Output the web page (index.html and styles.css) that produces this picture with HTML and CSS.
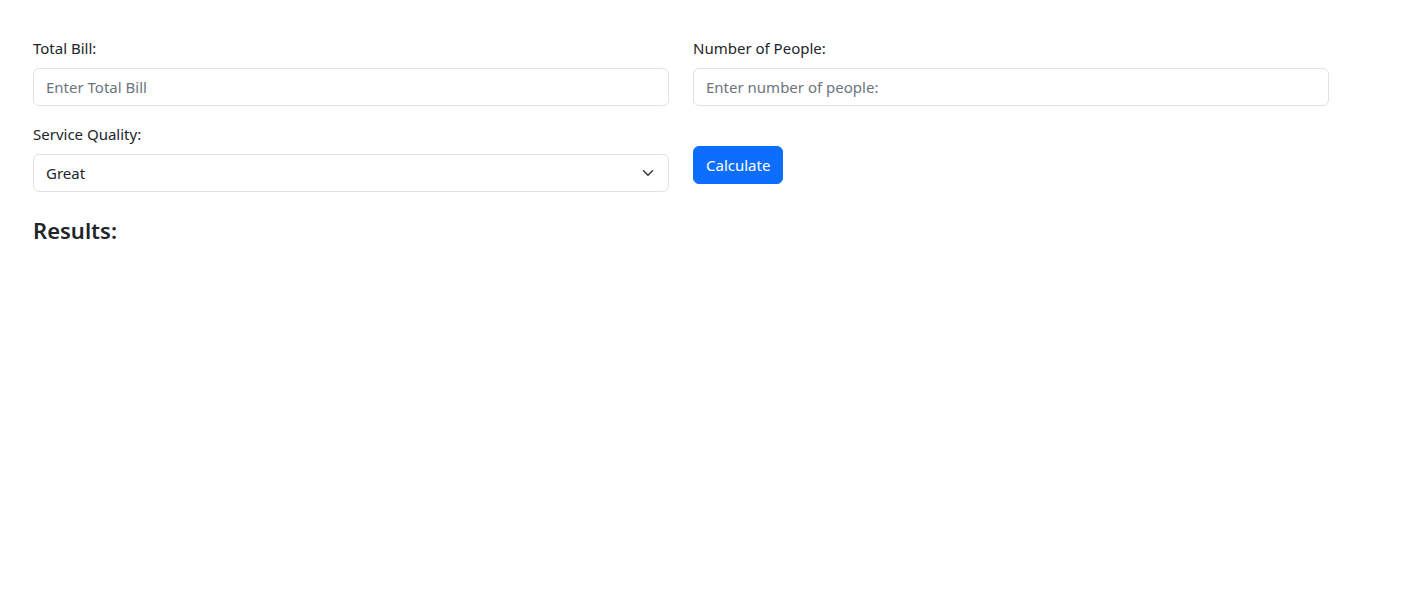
FILE: index.html
```html
<!DOCTYPE html>
<html lang="en">
<head>
<meta charset="utf-8">
<title>Tip Calculator</title>
<link rel="stylesheet" href="styles.css">
</head>
<body>
<div class="container">
  <div class="row">
    <div class="field">
      <label class="form-label" for="bill">Total Bill:</label>
      <input class="form-control" id="bill" type="text" placeholder="Enter Total Bill">
    </div>
    <div class="field">
      <label class="form-label" for="people">Number of People:</label>
      <input class="form-control" id="people" type="text" placeholder="Enter number of people:">
    </div>
  </div>
  <div class="row">
    <div class="field">
      <label class="form-label" for="service">Service Quality:</label>
      <select class="form-select" id="service">
        <option>Great</option>
        <option>Good</option>
        <option>Bad</option>
      </select>
    </div>
    <div class="field">
      <button class="btn" type="button">Calculate</button>
    </div>
  </div>
  <h4 class="results">Results:</h4>
</div>
</body>
</html>
```
FILE: styles.css
```css
* { box-sizing: border-box; }
html, body { margin: 0; padding: 0; background: #fff; }
body {
  font-family: "Noto Sans", "Open Sans", sans-serif;
  font-size: 15px;
  line-height: 1.5;
  color: #212529;
}
.container {
  padding: 36px 33px 0 33px;
  max-width: 1362px;
}
.row {
  display: grid;
  grid-template-columns: 636px 636px;
  column-gap: 24px;
  margin-bottom: 16px;
}
.form-label {
  display: block;
  height: 24px;
  line-height: 24px;
  margin-bottom: 8px;
}
.form-control, .form-select {
  display: block;
  width: 100%;
  height: 38px;
  padding: 6px 12px;
  font-family: inherit;
  font-size: 15px;
  line-height: 24px;
  color: #212529;
  background-color: #fff;
  border: 1px solid #dee2e6;
  border-radius: 6px;
  outline: none;
}
.form-control::placeholder { color: #6c757d; opacity: 1; }
.form-select {
  appearance: none;
  -webkit-appearance: none;
  padding-right: 36px;
  background-image: url("data:image/svg+xml,%3csvg xmlns='http://www.w3.org/2000/svg' viewBox='0 0 16 16'%3e%3cpath fill='none' stroke='%23343a40' stroke-linecap='round' stroke-linejoin='round' stroke-width='2' d='m2 5 6 6 6-6'/%3e%3c/svg%3e");
  background-repeat: no-repeat;
  background-position: right 12px center;
  background-size: 16px 12px;
}
.btn {
  margin-top: 24px;
  height: 38px;
  padding: 6px 12px;
  font-family: inherit;
  font-size: 15px;
  line-height: 24px;
  color: #fff;
  background-color: #0d6efd;
  border: 1px solid #0d6efd;
  border-radius: 6px;
  cursor: pointer;
}
.results {
  margin: 25px 0 0 0;
  font-size: 22px;
  font-weight: 600;
  line-height: 1.2;
}
```
